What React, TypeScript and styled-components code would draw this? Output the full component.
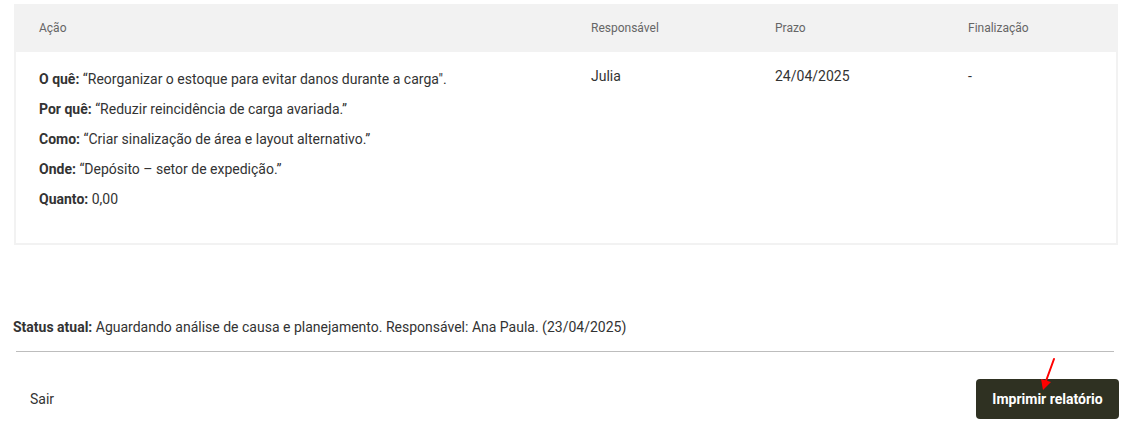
import styled, { createGlobalStyle } from 'styled-components';

const GlobalStyle = createGlobalStyle`
  html, body {
    margin: 0;
    padding: 0;
    background: #ffffff;
    font-family: Roboto, "Liberation Sans", Arial, sans-serif;
    color: #333333;
  }
`;

type Item = { label: string; value: string };

const items: Item[] = [
  { label: 'O quê:', value: '“Reorganizar o estoque para evitar danos durante a carga".' },
  { label: 'Por quê:', value: '“Reduzir reincidência de carga avariada.”' },
  { label: 'Como:', value: '“Criar sinalização de área e layout alternativo.”' },
  { label: 'Onde:', value: '“Depósito – setor de expedição.”' },
  { label: 'Quanto:', value: '0,00' },
];

export default function App() {
  return (
    <>
      <GlobalStyle />
      <Page>
        <Card>
          <HeaderRow>
            <HeadCell>Ação</HeadCell>
            <HeadCell>Responsável</HeadCell>
            <HeadCell>Prazo</HeadCell>
            <HeadCell>Finalização</HeadCell>
          </HeaderRow>
          <BodyRow>
            <ActionList>
              {items.map(item => (
                <ActionLine key={item.label}>
                  <strong>{item.label}</strong> {item.value}
                </ActionLine>
              ))}
            </ActionList>
            <Cell>Julia</Cell>
            <Cell>24/04/2025</Cell>
            <Cell>-</Cell>
          </BodyRow>
        </Card>

        <Status>
          <strong>Status atual:</strong> Aguardando análise de causa e planejamento. Responsável: Ana Paula.
          (23/04/2025)
        </Status>
        <Divider />

        <Footer>
          <ExitButton>Sair</ExitButton>
          <PrintButton>
            Imprimir relatório
            <Arrow width="20" height="40" viewBox="0 0 20 40">
              <line x1="16" y1="2" x2="8" y2="24" stroke="#ff0000" strokeWidth="2" strokeLinecap="round" />
              <polygon points="3,22 13,25 5,33" fill="#ff0000" />
            </Arrow>
          </PrintButton>
        </Footer>
      </Page>
    </>
  );
}

const Page = styled.div`
  padding: 4px 8px 0 13px;
  display: flex;
  flex-direction: column;
`;

const Card = styled.div`
  margin-left: 1px;
  border: 2px solid #f2f2f2;
  border-top: none;
  background: #ffffff;
`;

const columns = '552px 184px 193px 1fr';

const HeaderRow = styled.div`
  display: grid;
  grid-template-columns: ${columns};
  height: 48px;
  align-items: center;
  background: #f2f2f2;
  padding-left: 25px;
  margin: 0 -2px;
`;

const HeadCell = styled.div`
  font-size: 12px;
  color: #666666;
  line-height: 14px;
`;

const BodyRow = styled.div`
  display: grid;
  grid-template-columns: ${columns};
  padding: 16px 0 35px 23px;
`;

const ActionList = styled.div`
  display: flex;
  flex-direction: column;
  gap: 13px;
  padding-top: 3px;
`;

const ActionLine = styled.div`
  font-size: 14px;
  line-height: 17px;
  color: #333333;

  strong {
    font-weight: 700;
  }
`;

const Cell = styled.div`
  font-size: 14px;
  line-height: 17px;
  color: #333333;
`;

const Status = styled.div`
  margin-top: 74px;
  font-size: 14px;
  line-height: 17px;
  color: #333333;

  strong {
    font-weight: 700;
  }
`;

const Divider = styled.hr`
  margin: 15px 4px 0 3px;
  border: none;
  border-top: 1px solid #bdbdbd;
  height: 0;
`;

const Footer = styled.div`
  display: flex;
  justify-content: space-between;
  align-items: center;
  margin-top: 27px;
  padding-left: 17px;
`;

const ExitButton = styled.button`
  background: none;
  border: none;
  padding: 0;
  font-family: inherit;
  font-size: 14px;
  color: #333333;
  cursor: pointer;
`;

const PrintButton = styled.button`
  position: relative;
  width: 143px;
  height: 40px;
  margin-right: -1px;
  background: #2f3122;
  border: none;
  border-radius: 4px;
  color: #ffffff;
  font-family: inherit;
  font-size: 14px;
  font-weight: 700;
  cursor: pointer;
`;

const Arrow = styled.svg`
  position: absolute;
  left: 62px;
  top: -22px;
  pointer-events: none;
`;
